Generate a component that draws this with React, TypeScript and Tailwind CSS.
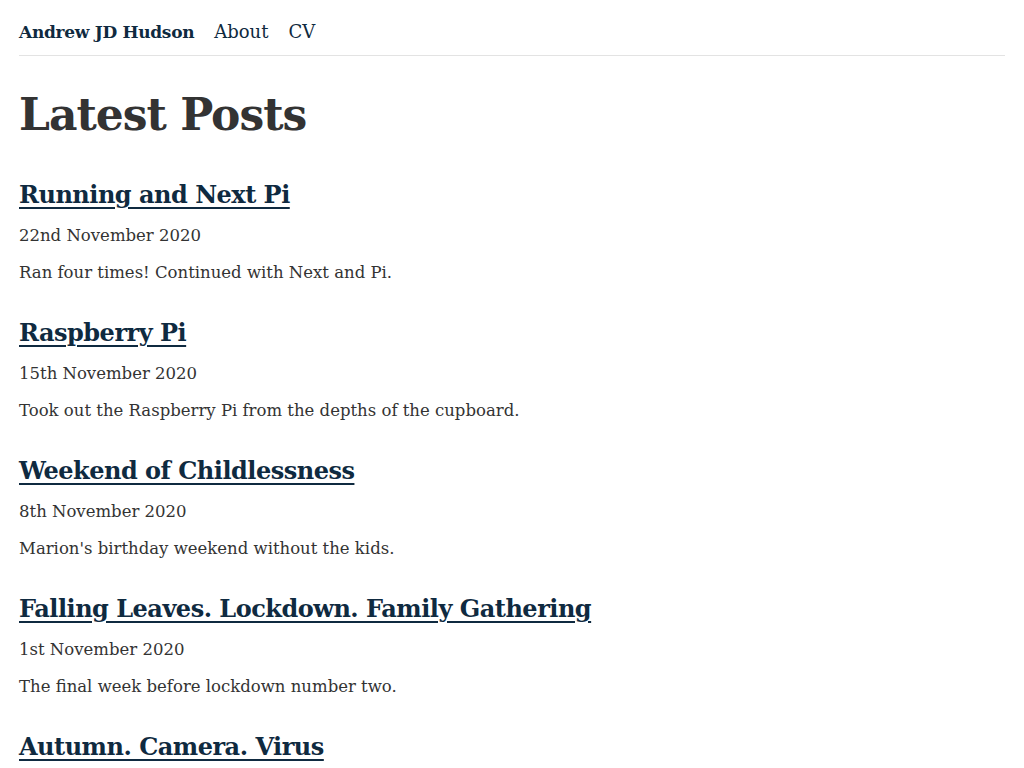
const posts = [
  {
    title: "Running and Next Pi",
    date: "22nd November 2020",
    summary: "Ran four times! Continued with Next and Pi.",
  },
  {
    title: "Raspberry Pi",
    date: "15th November 2020",
    summary: "Took out the Raspberry Pi from the depths of the cupboard.",
  },
  {
    title: "Weekend of Childlessness",
    date: "8th November 2020",
    summary: "Marion's birthday weekend without the kids.",
  },
  {
    title: "Falling Leaves. Lockdown. Family Gathering",
    date: "1st November 2020",
    summary: "The final week before lockdown number two.",
  },
  {
    title: "Autumn. Camera. Virus",
    date: "25th October 2020",
    summary: "A week of autumn walks.",
  },
];

export default function App() {
  return (
    <div className="h-screen overflow-hidden bg-white px-[19px] text-[#333] font-['DejaVu_Serif',serif]">
      {/* Header */}
      <nav className="flex items-end gap-5 h-[56px] pb-[11px] border-b border-[#e3e3e3] text-[#0f2a40] leading-[24px]">
        <a href="#" className="text-[17px] font-bold tracking-[-0.3px]">Andrew JD Hudson</a>
        <a href="#" className="text-[18px]">About</a>
        <a href="#" className="text-[18px]">CV</a>
      </nav>

      <main>
        <h1 className="mt-[31px] mb-[35px] text-[44px] leading-[56px] font-bold tracking-[-1px]">
          Latest Posts
        </h1>

        <div className="flex flex-col gap-[30px]">
          {posts.map((post) => (
            <article key={post.title} className="flex flex-col items-start">
              <a
                href="#"
                className="text-[24px] leading-[34px] font-bold tracking-[-0.5px] text-[#0f2a40] underline underline-offset-[4px] decoration-2"
              >
                {post.title}
              </a>
              <p className="mt-[11px] text-[16.5px] leading-[26px]">{post.date}</p>
              <p className="mt-[11px] text-[16.5px] leading-[26px]">{post.summary}</p>
            </article>
          ))}
        </div>
      </main>
    </div>
  );
}
